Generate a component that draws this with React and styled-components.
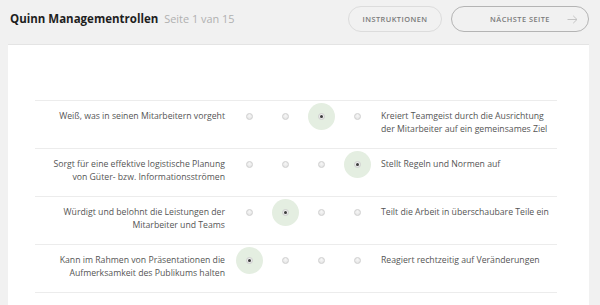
import React from "react";
import styled, { createGlobalStyle } from "styled-components";

const GlobalStyle = createGlobalStyle`
  body {
    margin: 0;
    background: #f1f1f1;
    font-family: "Open Sans", "Liberation Sans", sans-serif;
  }
`;

const Page = styled.div`
  width: 600px;
  height: 305px;
  overflow: hidden;
`;

const Header = styled.div`
  height: 37px;
  display: flex;
  align-items: center;
  padding: 0 11px 0 10px;
`;

const Title = styled.h1`
  margin: 0;
  font-size: 11.5px;
  font-weight: 700;
  color: #1e1e1e;
`;

const PageInfo = styled.span`
  margin-left: 6px;
  font-size: 10.9px;
  color: #b0b0b0;
`;

const Actions = styled.div`
  margin-left: auto;
  display: flex;
  gap: 9px;
`;

const Button = styled.button`
  position: relative;
  height: 26px;
  width: ${(p) => p.$width}px;
  border-radius: 13px;
  border: 1px solid ${(p) => (p.$primary ? "#b4b4b4" : "#dcdcdc")};
  background: transparent;
  font-family: "Open Sans", "Liberation Sans", sans-serif;
  font-size: 7.4px;
  font-weight: 600;
  letter-spacing: 0.45px;
  color: #7a7a7a;
  text-transform: uppercase;
  padding: 0;
  display: flex;
  align-items: center;
  justify-content: center;
`;

const Arrow = styled.svg`
  position: absolute;
  right: 10px;
  top: 8px;
`;

const Panel = styled.div`
  margin: 7px 11px 0 8px;
  background: #fff;
  border-top: 1px solid #e4e4e4;
  padding: 55px 32px 0 27px;
  height: 300px;
`;

const Row = styled.div`
  display: grid;
  grid-template-columns: 196px repeat(4, 36px) 1fr;
  height: 47px;
  border-top: 1px solid #ececec;
  &:last-child {
    border-bottom: 1px solid #ececec;
  }
`;

const Label = styled.div`
  padding: 9px ${(p) => (p.$right ? "0 0 6px" : "6px 0 14px")};
  font-size: 8.7px;
  line-height: 13.4px;
  color: #555;
  text-align: ${(p) => (p.$right ? "left" : "right")};
`;

const Cell = styled.div`
  height: 13.4px;
  margin-top: 9px;
  display: flex;
  align-items: center;
  justify-content: center;
  position: relative;
`;

const Halo = styled.span`
  position: absolute;
  left: 50%;
  top: 50%;
  width: 27px;
  height: 27px;
  margin: -13.5px 0 0 -13.5px;
  border-radius: 50%;
  background: #e4eee1;
`;

const Radio = styled.span`
  position: relative;
  width: 7px;
  height: 7px;
  box-sizing: border-box;
  border-radius: 50%;
  border: 1px solid #cfcfcf;
  background: radial-gradient(circle at 50% 35%, #f7f7f7, #e0e0e0);
  display: flex;
  align-items: center;
  justify-content: center;
  &::after {
    content: "";
    display: ${(p) => (p.$checked ? "block" : "none")};
    width: 3px;
    height: 3px;
    border-radius: 50%;
    background: #3c3c3c;
  }
`;

const items = [
  {
    left: "Weiß, was in seinen Mitarbeitern vorgeht",
    right: "Kreiert Teamgeist durch die Ausrichtung der Mitarbeiter auf ein gemeinsames Ziel",
    value: 2,
  },
  {
    left: "Sorgt für eine effektive logistische Planung von Güter- bzw. Informationsströmen",
    right: "Stellt Regeln und Normen auf",
    value: 3,
  },
  {
    left: "Würdigt und belohnt die Leistungen der Mitarbeiter und Teams",
    right: "Teilt die Arbeit in überschaubare Teile ein",
    value: 1,
  },
  {
    left: "Kann im Rahmen von Präsentationen die Aufmerksamkeit des Publikums halten",
    right: "Reagiert rechtzeitig auf Veränderungen",
    value: 0,
  },
];

export default function App() {
  return (
    <Page>
      <GlobalStyle />
      <Header>
        <Title>Quinn Managementrollen</Title>
        <PageInfo>Seite 1 van 15</PageInfo>
        <Actions>
          <Button $width={94}>Instruktionen</Button>
          <Button $width={138} $primary>
            Nächste Seite
            <Arrow width="11" height="9" viewBox="0 0 11 9">
              <path d="M0.5 4.5H10M6.2 0.8L10 4.5L6.2 8.2" fill="none" stroke="#c4c4c4" strokeWidth="1" />
            </Arrow>
          </Button>
        </Actions>
      </Header>
      <Panel>
        {items.map((item, i) => (
          <Row key={i}>
            <Label>{item.left}</Label>
            {[0, 1, 2, 3].map((n) => (
              <Cell key={n}>
                {item.value === n && <Halo />}
                <Radio $checked={item.value === n} />
              </Cell>
            ))}
            <Label $right>{item.right}</Label>
          </Row>
        ))}
      </Panel>
    </Page>
  );
}
